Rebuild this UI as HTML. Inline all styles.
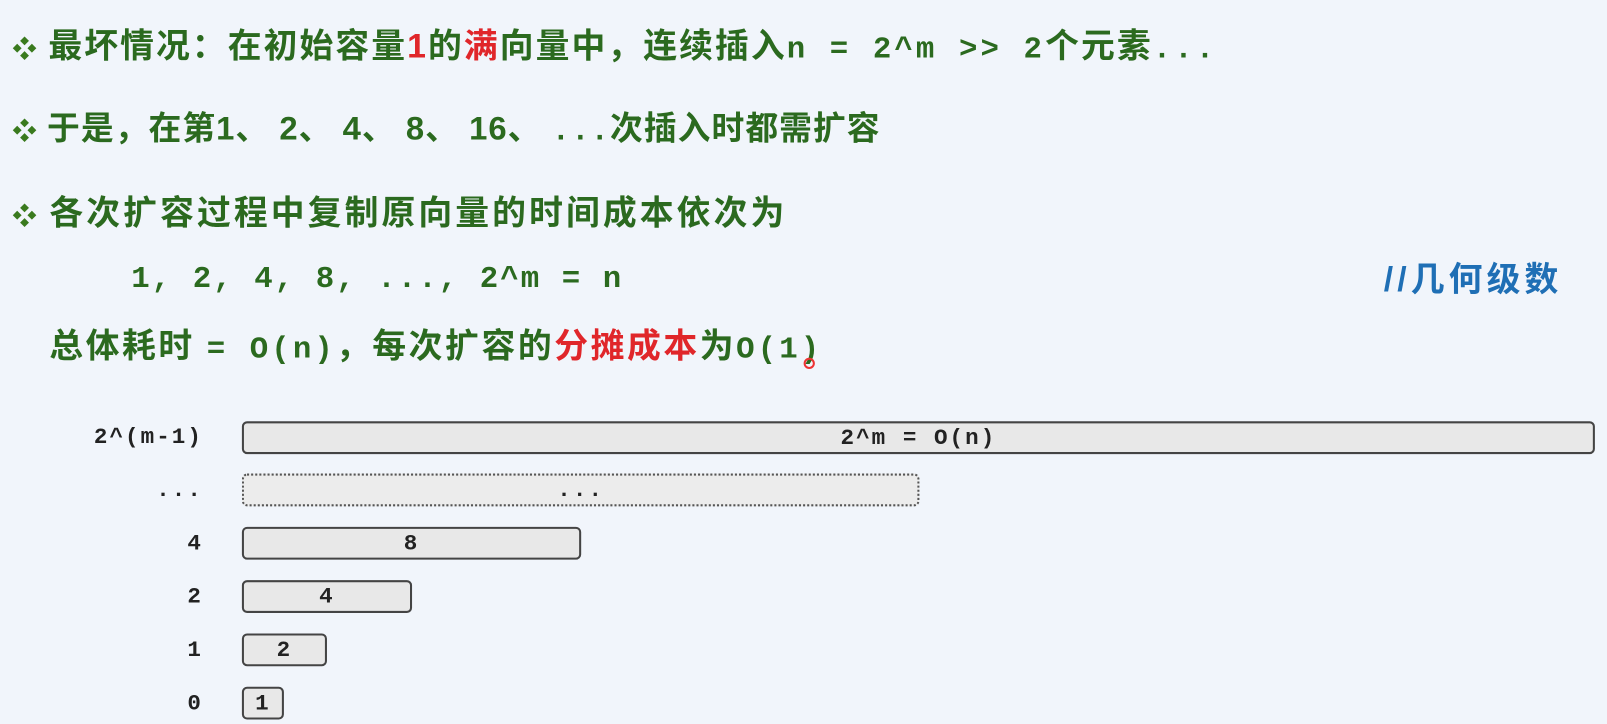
<!DOCTYPE html>
<html><head><meta charset="utf-8"><style>
body{margin:0;width:1607px;height:723px;background:#f1f5fb;overflow:hidden;position:relative;font-family:"Liberation Sans","Noto Sans CJK SC",sans-serif}
#w{position:absolute;left:0;top:0;width:1568px;height:706px;transform:scale(1.025);transform-origin:0 0}
.l{position:absolute;left:12px;font-size:33px;font-weight:bold;color:#2b6a1f;white-space:nowrap;line-height:36px;letter-spacing:2px}
.m{font-family:"Liberation Mono","Noto Sans CJK SC",monospace;font-weight:bold;font-size:30px;letter-spacing:3px}
.r{color:#e0262a}
.d{color:#3a7a1e;font-size:24px;letter-spacing:0}
.box{position:absolute;left:236px;height:28px;border:2px solid #444;border-radius:5px;background:#e8e8e8;text-align:center;font:bold 22px/30px "Liberation Mono",monospace;letter-spacing:2px;color:#222}
.lab{position:absolute;right:1370px;font:bold 22px/32px "Liberation Mono",monospace;letter-spacing:2px;color:#222;white-space:nowrap}
</style></head><body><div id="w">
<div class="l" style="top:27px"><span class="d">❖</span> 最坏情况：在初始容量<span class="r">1</span>的<span class="r">满</span>向量中，连续插入<span class="m">n = 2^m &gt;&gt; 2</span>个元素<span class="m">...</span></div>
<div class="l" style="top:107px;font-size:32px;letter-spacing:1px"><span class="d">❖</span> 于是，在第1、 2、 4、 8、 16、 <span class="m" style="letter-spacing:1px">...</span>次插入时都需扩容</div>
<div class="l" style="top:190px;letter-spacing:3px"><span class="d">❖</span> 各次扩容过程中复制原向量的时间成本依次为</div>
<div class="l m" style="top:255px;left:128px;letter-spacing:2px">1, 2, 4, 8, ..., 2^m = n</div>
<div class="l" style="top:255px;left:1350px;color:#1f6fb5;letter-spacing:4px">//几何级数</div>
<div class="l" style="top:320px;left:48px;letter-spacing:2.5px">总体耗时 <span class="m">= O(n)</span>，每次扩容的<span class="r">分摊成本</span>为<span class="m">O(1)</span></div>
<div style="position:absolute;left:784px;top:349px;width:7px;height:7px;border-radius:50%;border:2px solid #e33"></div>
<div class="lab" style="top:411px">2^(m-1)</div>
<div class="box" style="top:411px;width:1316px">2^m = O(n)</div>
<div class="lab" style="top:463px">...</div>
<div class="box" style="top:462px;width:657px;border-style:dotted;border-color:#555;background:#ececec">...</div>
<div class="lab" style="top:515px">4</div>
<div class="box" style="top:514px;width:327px">8</div>
<div class="lab" style="top:567px">2</div>
<div class="box" style="top:566px;width:162px">4</div>
<div class="lab" style="top:619px">1</div>
<div class="box" style="top:618px;width:79px">2</div>
<div class="lab" style="top:671px">0</div>
<div class="box" style="top:670px;width:37px">1</div>
</div></body></html>
